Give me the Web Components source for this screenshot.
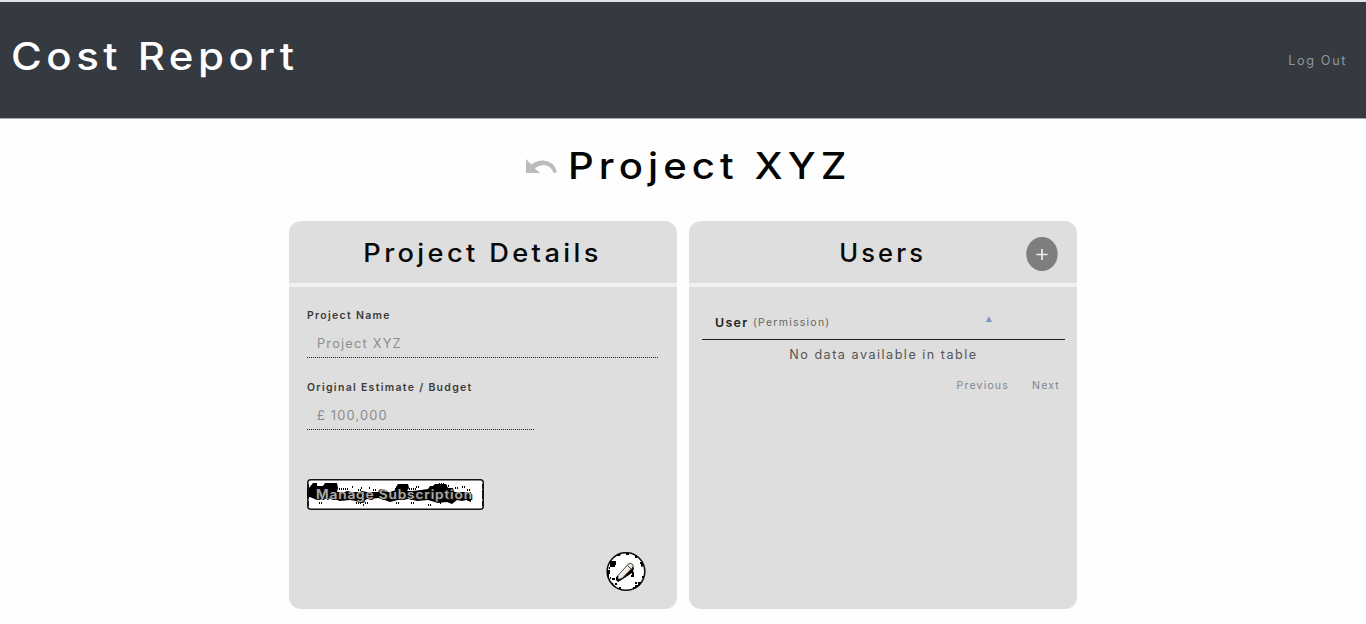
<!DOCTYPE html>
<html lang="en"><head><meta charset="utf-8"><title>Cost Report</title>
<style>
html,body{margin:0;height:100%}
body{background:#fefefe;font-family:Inter,"Open Sans",sans-serif;overflow:hidden}
</style></head><body>
<cost-app></cost-app>
<script>
function define(name, html){
  const t=document.createElement('template'); t.innerHTML=html;
  customElements.define(name, class extends HTMLElement{
    constructor(){super();this.attachShadow({mode:'open'}).appendChild(t.content.cloneNode(true));}
  });
}
define('app-header',`<style>
:host{display:flex;box-sizing:border-box;height:119px;border-top:2px solid #dfe3e6;border-bottom:1px solid #a5a8ab;background:#343a40;justify-content:space-between;padding:0 19px 0 11px;align-items:flex-start;white-space:nowrap}
h1{margin:30px 0 0;font-weight:500;font-size:37.5px;line-height:50px;letter-spacing:4px;color:#fff;transform:scaleX(1.12);transform-origin:0 0}
a{margin-top:49px;font-size:12.7px;line-height:20px;letter-spacing:1.6px;color:#929598}
</style><h1>Cost Report</h1><a>Log Out</a>`);
define('page-title',`<style>
:host{display:flex;height:102px;padding-left:525px;white-space:nowrap}
svg{width:32px;height:18px;margin:39px 0 0 0}
h2{margin:22px 0 0 11px;font-weight:450;font-size:36.5px;line-height:51px;letter-spacing:4.6px;color:#050505;transform:scaleX(1.1);transform-origin:0 0}
</style><svg viewBox="0 0 32 18"><path d="M1 1V15H15L9.8 10.5Q14 7 19 7Q26 7.5 28.5 15L32 14Q29 3 18 2.5Q12 2.5 6.3 6.5Z" fill="#bbb"/></svg><h2><slot></slot></h2>`);
define('panel-card',`<style>
:host{display:flex;flex-direction:column;width:388px;height:388px;border-radius:12px;background:#dedede;overflow:hidden}
header{display:grid;grid-template-columns:1fr auto 1fr;height:62px;border-bottom:4px solid #f2f2f2;flex:none;align-items:start}
h3{grid-column:2;margin:13px 0 0;font-weight:450;font-size:25px;line-height:38px;letter-spacing:3.1px;color:#080808;white-space:nowrap;transform:scaleX(var(--stretch,1.088))}
.act{display:flex;justify-content:flex-end;padding:15.5px 19px 0 0}
</style><header><h3><slot name="title"></slot></h3><div class="act"><slot name="action"></slot></div></header><slot></slot>`);
define('round-add',`<style>
:host{display:block;width:32px;height:34px}svg{display:block}
</style><svg width="32" height="34"><ellipse cx="16" cy="17" rx="15.7" ry="17" fill="#7e7e7e"/><path d="M10.5 17.5H21.5M16 12V23" stroke="#eee" stroke-width="1.7"/></svg>`);
define('form-field',`<style>
:host{display:block;height:72px;white-space:nowrap}
.l{font-weight:600;font-size:10.5px;line-height:16px;letter-spacing:1.3px;color:#3c3c3c}
.v{margin-top:7px;height:26px;box-sizing:content-box;padding-left:10px;font-size:12.8px;line-height:25px;letter-spacing:1.2px;color:#8c8c8c;border-bottom:1px dotted #222;width:var(--w,341px)}
</style><div class="l"><slot name="label"></slot></div><div class="v"><slot></slot></div>`);
define('manage-button',`<style>
:host{display:grid;width:177px;height:31px}
svg,span{grid-area:1/1}
span{position:relative;padding-left:9px;font-weight:600;font-size:12.6px;line-height:31px;letter-spacing:.75px;color:#aaa;text-shadow:1px 1px 0 #17130f,-1px 0 0 #17130f;white-space:nowrap;transform:scaleX(1.09);transform-origin:9px 0}
</style><svg width="177" height="31"><rect x=".8" y=".8" width="175.5" height="29.4" rx="3" fill="#fff" stroke="#151515" stroke-width="1.5"/>
<path d="M6 4h4v3h6l2-3h12l1 5-1 4h8l2-1 5 1h8l2-1 5 1h23l6-2v-3l2-3h10l1 4-2 3h6l8-1 7-1 2-3h3l2-2h11l2 4h5l1 4h17v10l-5-2-4 1-5-1-5 4-5-2-9 1-10-3-11 1-8-2-11 1-8 2-11-4-12 1-5 3-12-2-10 1-9-3-14 2-7-3-4 1-3-3z"/>
<path d="M32 10h10M45 8h2M51 11h3M54 9h1M62 9h2M66 11h4M88 10h2M102 10h8M109 8h3M132 5h5M139 7h3M148 9h4M155 8h3M160 11h4M12 24h3M49 24h5M56 26h2M58 24h3M89 24h3M104 24h3M121 26h3M133 24h2" stroke="#000" stroke-width="2" stroke-dasharray="1 1"/><path d="M1.5 5V27M175.5 5V27" stroke="#111" stroke-width="1" stroke-dasharray="5 1 9 2"/></svg><span><slot></slot></span>`);
define('edit-button',`<style>:host{display:block;width:40px;height:40px}svg{display:block}</style>
<svg width="40" height="40"><defs><clipPath id="c"><circle cx="20" cy="19.5" r="19.5"/></clipPath><linearGradient id="g" x1="0" y1="0" x2="1" y2="1"><stop offset="0" stop-color="#68849b"/><stop offset=".35" stop-color="#fff"/><stop offset=".6" stop-color="#e6dccf"/><stop offset="1" stop-color="#493325"/></linearGradient></defs>
<circle cx="20" cy="19.5" r="18.8" fill="#fff" stroke="#111" stroke-width="1.6"/>
<g clip-path="url(#c)"><path d="M4 9h6v4H9v2H4zM1 18h3v4h-1v3h2v2H3l3 7 3 2-2-5H4v-6H1zM9 4l6-3-1 3zM34 30h-2v3h-3v2h-2v2h6l4-6zM35 9l3 5-3 1zM10 25l3-2 9-10h4l2 3-1 4h1v5h-2v-4l-9 6-5 3-2-2z"/><path d="M12 3h2M20 2h3M29 5h2M34 11h2M3 16h1M36 25h2M29 31h2M13 36h2M6 27h3M9 32h2M25 24h2" stroke="#000" stroke-width="2"/></g>
<path d="M12 23.5 22 12.3q3-2.5 5.2.8 0 1.8-1 3.1L16 26.6l-4 1z" fill="url(#g)" stroke="#17110c" stroke-width=".8"/><path d="m21.5 13.5 4.2 4" stroke="#49372a" stroke-width="1"/></svg>`);
define('user-table',`<style>
:host{display:block;padding:25px 12px 0 13px;white-space:nowrap}
.h{display:flex;height:27px;border-bottom:1px solid #222;padding:0 0 0 13px;line-height:22px;color:#222}
b{font-size:12.4px;font-weight:600;letter-spacing:1.3px;width:38px}
small{font-size:10.5px;letter-spacing:1.25px;color:#666;width:232px}
svg{margin-top:4px}
.e{text-align:center;font-size:12.6px;line-height:18px;letter-spacing:1.5px;color:#555;padding-top:6px}
.p{display:flex;justify-content:flex-end;gap:23px;padding-right:5px;margin-top:14px;font-size:10.5px;line-height:16px;letter-spacing:1.2px;color:#81868b}
</style><div class="h"><b>User</b><small>(Permission)</small><svg width="8" height="7"><path d="M1 6 4 0 7 6z" fill="#8296c5"/></svg></div>
<div class="e">No data available in table</div><div class="p"><span>Previous</span><span>Next</span></div>`);
define('cost-app',`<style>
:host{display:block}
main{display:flex;gap:12px;padding-left:289px}
.form{display:flex;flex-direction:column;height:322px;padding:21px 0 0 18px;box-sizing:border-box}
.short{--w:217px}
.users{--stretch:1.02}
manage-button{margin-top:27px}
edit-button{margin:42px 0 0 299px}
</style><app-header></app-header><page-title>Project XYZ</page-title>
<main><panel-card><span slot="title">Project Details</span><div class="form">
<form-field><span slot="label">Project Name</span>Project XYZ</form-field>
<form-field class="short"><span slot="label">Original Estimate / Budget</span>£ 100,000</form-field>
<manage-button>Manage Subscription</manage-button><edit-button></edit-button></div></panel-card>
<panel-card class="users"><span slot="title">Users</span><round-add slot="action"></round-add><user-table></user-table></panel-card></main>`);
</script></body></html>
